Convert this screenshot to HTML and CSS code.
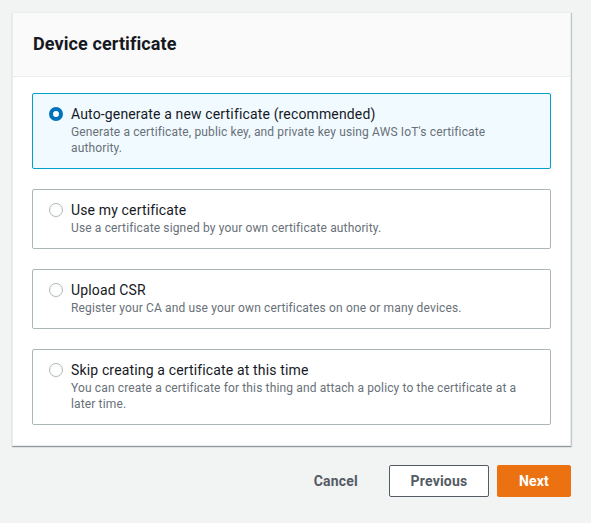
FILE: index.html
```html
<!DOCTYPE html>
<html>
<head>
<meta charset="utf-8">
<link rel="stylesheet" href="styles.css">
</head>
<body>
<div class="page">
  <section class="card">
    <header class="card-header">
      <h2 class="title">Device certificate</h2>
    </header>
    <div class="options">
      <label class="option selected">
        <span class="radio checked"></span>
        <span class="text">
          <span class="label">Auto-generate a new certificate (recommended)</span>
          <span class="desc">Generate a certificate, public key, and private key using AWS IoT's certificate authority.</span>
        </span>
      </label>
      <label class="option">
        <span class="radio"></span>
        <span class="text">
          <span class="label">Use my certificate</span>
          <span class="desc">Use a certificate signed by your own certificate authority.</span>
        </span>
      </label>
      <label class="option">
        <span class="radio"></span>
        <span class="text">
          <span class="label">Upload CSR</span>
          <span class="desc">Register your CA and use your own certificates on one or many devices.</span>
        </span>
      </label>
      <label class="option">
        <span class="radio"></span>
        <span class="text">
          <span class="label">Skip creating a certificate at this time</span>
          <span class="desc">You can create a certificate for this thing and attach a policy to the certificate at a later time.</span>
        </span>
      </label>
    </div>
  </section>
  <div class="actions">
    <button class="btn link">Cancel</button>
    <button class="btn normal">Previous</button>
    <button class="btn primary">Next</button>
  </div>
</div>
</body>
</html>
```

FILE: styles.css
```css
* { box-sizing: border-box; }
html, body { margin: 0; padding: 0; }
body {
  background: #f2f3f3;
  font-family: Roboto, "Liberation Sans", sans-serif;
  color: #16191f;
}
.page {
  padding: 12px 20px 0 12px;
  width: 591px;
}
.card {
  background: #fff;
  border: 1px solid #eaeded;
  box-shadow: 0 1px 1px 0 rgba(0, 28, 36, 0.3), 1px 1px 1px 0 rgba(0, 28, 36, 0.15);
}
.card-header {
  background: #fafafa;
  border-bottom: 1px solid #eaeded;
  padding: 20px 20px 21px;
}
.title {
  margin: 0;
  font-size: 18px;
  line-height: 22px;
  font-weight: 700;
  letter-spacing: 0.1px;
}
.options {
  padding: 16px 19px 20px;
  display: flex;
  flex-direction: column;
  gap: 20px;
}
.option {
  display: flex;
  align-items: flex-start;
  border: 1px solid #aab7b8;
  border-radius: 2px;
  padding: 10px 18px 12px 16px;
  gap: 8px;
}
.option.selected {
  border-color: #00a1c9;
  background: #f1faff;
}
.radio {
  flex: none;
  width: 14px;
  height: 14px;
  margin-top: 3px;
  border-radius: 50%;
  border: 1.5px solid #aab7b8;
  background: #fff;
}
.radio.checked {
  border: 4.5px solid #0073bb;
}
.text { display: flex; flex-direction: column; }
.label {
  font-size: 14px;
  line-height: 20px;
  letter-spacing: 0.15px;
}
.desc {
  font-size: 12px;
  line-height: 16px;
  color: #687078;
  letter-spacing: 0.14px;
}
.actions {
  display: flex;
  justify-content: flex-end;
  align-items: center;
  gap: 8px;
  padding-top: 19px;
}
.btn {
  font-family: inherit;
  font-size: 14px;
  font-weight: 700;
  height: 32px;
  line-height: 20px;
  border-radius: 2px;
  padding: 0 20px;
  cursor: pointer;
  letter-spacing: 0.2px;
}
.btn.link {
  background: none;
  border: 1px solid transparent;
  color: #545b64;
  margin-right: 2px;
}
.btn.normal {
  background: #fff;
  border: 1px solid #545b64;
  color: #545b64;
  width: 100px;
}
.btn.primary {
  background: #ec7211;
  border: 1px solid #ec7211;
  color: #fff;
  width: 74px;
}
```
